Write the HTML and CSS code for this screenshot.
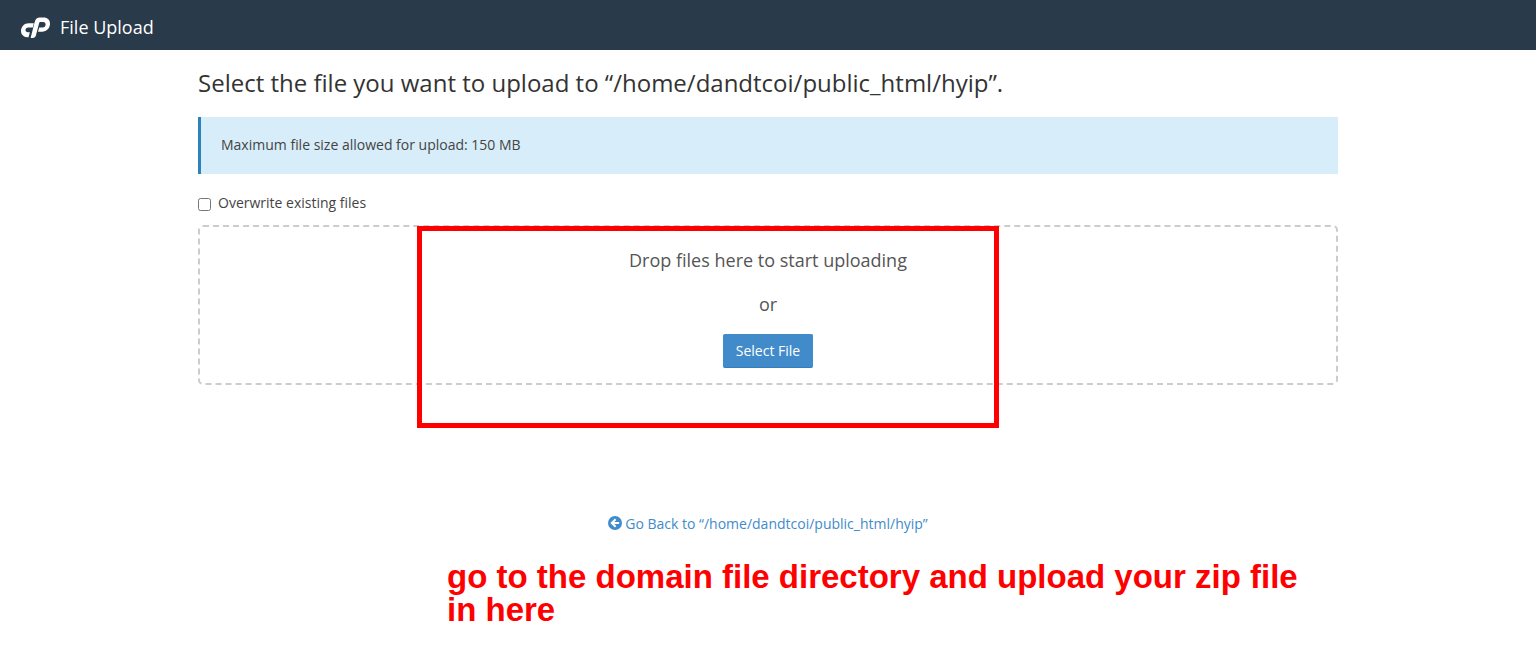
FILE: index.html
```html
<!DOCTYPE html>
<html lang="en">
<head>
<meta charset="utf-8">
<meta name="viewport" content="width=device-width, initial-scale=1">
<title>File Upload</title>
<link rel="stylesheet" href="styles.css">
</head>
<body>
<header class="topbar">
  <svg class="logo" viewBox="0 0 30 22" width="30" height="22" role="img" aria-label="cP">
    <path d="M13.9 7.2L12.8 11.4H8.3C6.7 11.4 5.5 12.5 5.5 14.1C5.5 15.4 6.4 16.3 7.7 16.3H9.9L8.5 21.2H7.2C3.6 21.2 1 18.6 1 15.1C1 10.6 4.2 7.2 8.7 7.2Z"/>
    <path d="M10.6 22L14.7 5.9C15.5 3 17.2 1.6 20 1.6H23.7C27.5 1.6 30 4 30 7.6C30 12.3 26.7 15.8 22 15.8H18L19.2 11.5H22.4C24.3 11.5 25.6 10.2 25.6 8.4C25.6 6.9 24.7 6 23.2 6H20.7C19.8 6 19.3 6.4 19.1 7.3L15.9 19.6C15.4 21.3 14.5 22 12.8 22Z"/>
  </svg>
  <span class="topbar-title">File Upload</span>
</header>
<main class="content">
  <h1 class="heading">Select the file you want to upload to “/home/dandtcoi/public_html/hyip”.</h1>
  <p class="notice">Maximum file size allowed for upload: 150 MB</p>
  <label class="overwrite"><input class="overwrite-box" type="checkbox"><span>Overwrite existing files</span></label>
  <section class="dropzone">
    <p class="drop-text">Drop files here to start uploading</p>
    <p class="drop-text">or</p>
    <button class="select-button" type="button">Select File</button>
    <div class="highlight"></div>
  </section>
  <a class="back-link" href="#">
    <svg class="back-icon" viewBox="0 0 14 14" width="14" height="14" aria-hidden="true">
      <circle cx="7" cy="7" r="7" fill="#428bca"/>
      <path d="M7.6 3.2L3.8 7L7.6 10.8M4.4 7H11.2" fill="none" stroke="#fff" stroke-width="2"/>
    </svg>
    <span>Go Back to “/home/dandtcoi/public_html/hyip”</span>
  </a>
  <p class="caption">go to the domain file directory and upload your zip file in here</p>
</main>
</body>
</html>
```
FILE: styles.css
```css
* { box-sizing: border-box; }
body {
  margin: 0;
  background: #fff;
  color: #333;
  font-family: "Open Sans", "Noto Sans", sans-serif;
  font-size: 14px;
  line-height: 20px;
}
h1, p { margin: 0; }
.topbar {
  display: flex;
  align-items: center;
  gap: 10px;
  height: 50px;
  padding: 4px 20px 0;
  background: #293a4a;
  color: #fff;
}
.logo { display: block; fill: #fff; }
.topbar-title { font-size: 18px; line-height: 26px; }
.content {
  max-width: 1140px;
  margin: 0 auto;
  padding: 16px 0;
}
.heading { font-size: 24px; line-height: 34px; font-weight: 400; }
.notice {
  margin-top: 17px;
  padding: 18px 20px 19px;
  border-left: 3px solid #2b83ba;
  background: #d7edf9;
  color: #444;
}
.overwrite {
  display: flex;
  align-items: center;
  gap: 7px;
  width: fit-content;
  margin-top: 19px;
  color: #444;
}
.overwrite-box { width: 13px; height: 13px; margin: 2px 0 0; }
.dropzone {
  position: relative;
  display: flex;
  flex-direction: column;
  align-items: center;
  margin-top: 12px;
  padding: 20px 20px 15px;
  border: 2px dashed #ccc;
  border-radius: 5px;
}
.drop-text {
  margin-bottom: 18px;
  color: #555;
  font-size: 18px;
  line-height: 26px;
}
.drop-text + .drop-text { margin-bottom: 17px; }
.select-button {
  padding: 6px 12px;
  border: 1px solid #428bca;
  border-bottom-color: #357ebd;
  border-radius: 2px;
  background: #428bca;
  color: #fff;
  font: inherit;
}
.highlight {
  position: absolute;
  top: -1px;
  left: 217px;
  width: 582px;
  height: 202px;
  border: 5px solid #f00;
  pointer-events: none;
}
.back-link {
  display: flex;
  justify-content: center;
  gap: 3px;
  width: fit-content;
  margin: 129px auto 0;
  color: #428bca;
  text-decoration: none;
}
.back-icon { margin-top: 2px; }
.caption {
  max-width: 860px;
  margin: 26px 0 0 249px;
  color: #f00;
  font: bold 33px/33px "Liberation Sans", Arial, sans-serif;
}
```
